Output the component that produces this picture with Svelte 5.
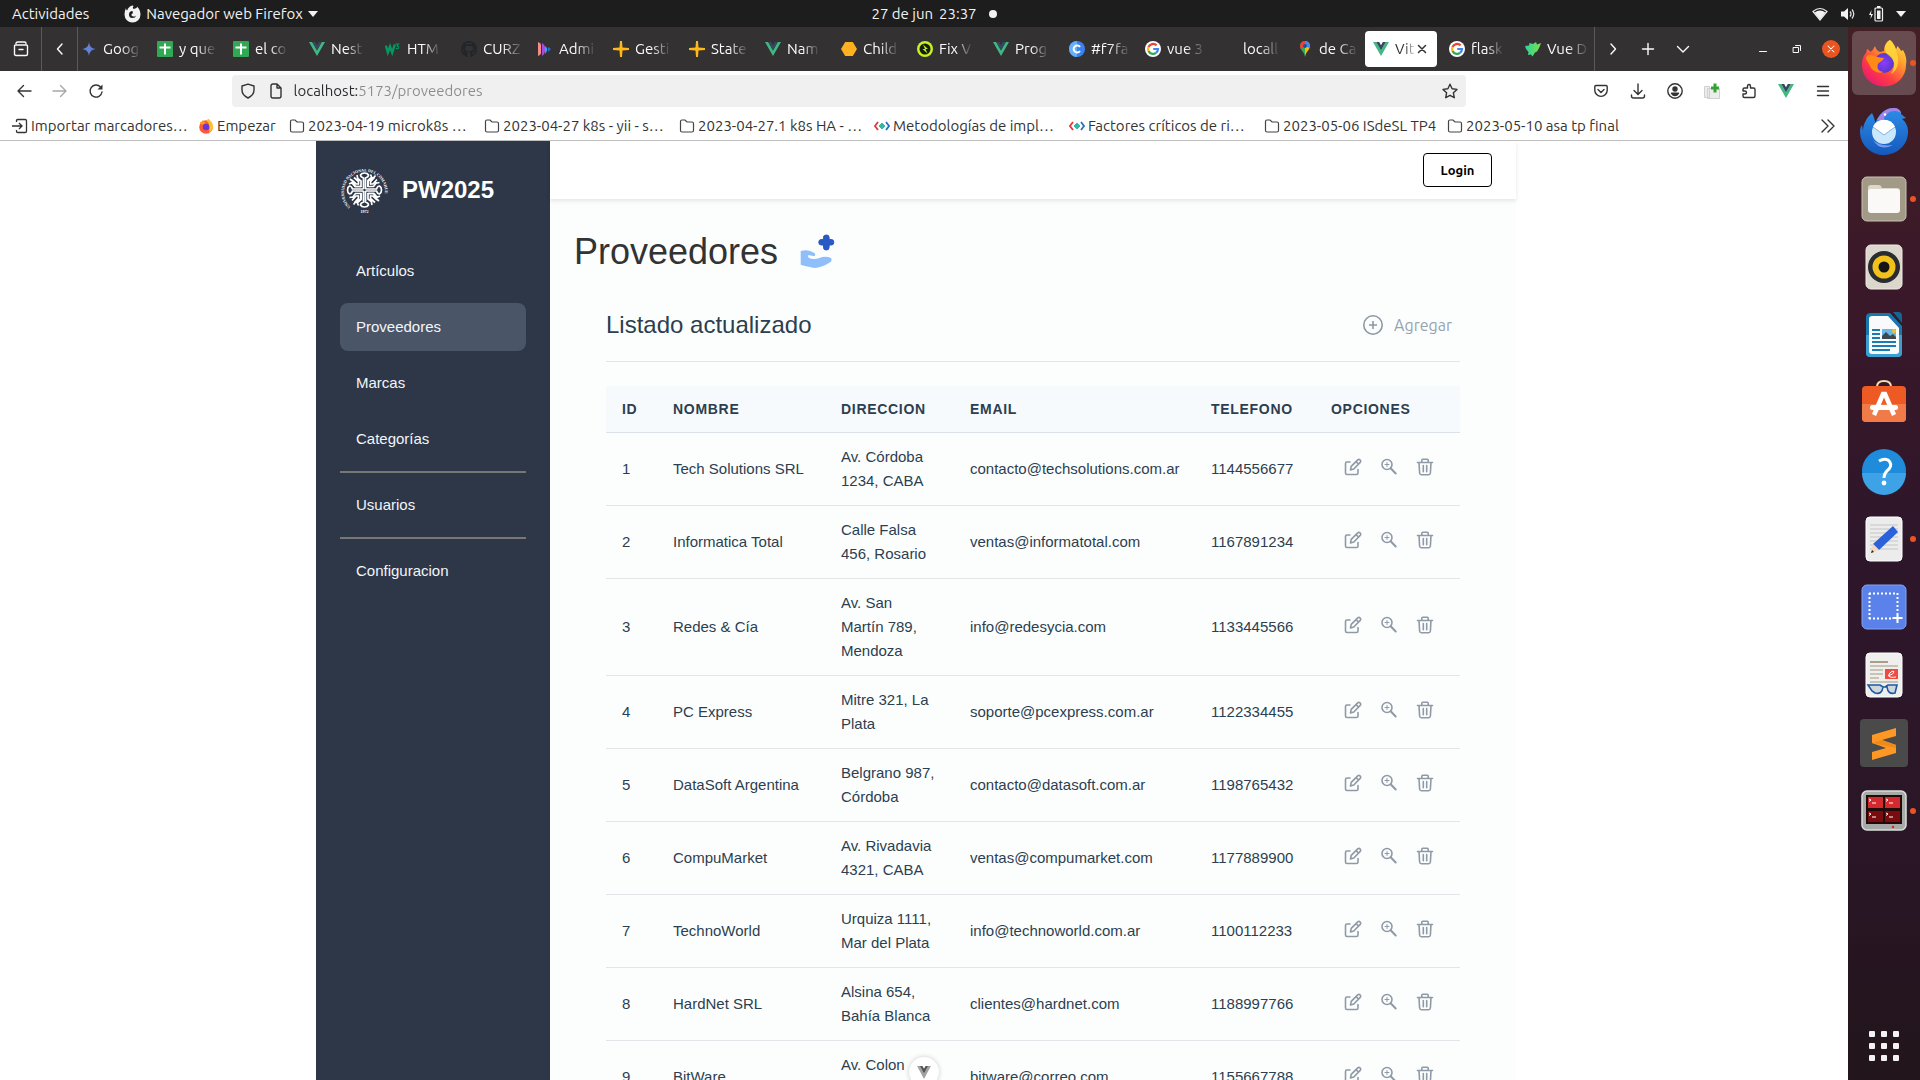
<script lang="ts">
  type Tab = { icon: string; title: string; active?: boolean };

  const tabs: Tab[] = [
    { icon: 'gemini', title: 'Goog' },
    { icon: 'sheet', title: 'y que' },
    { icon: 'sheet', title: 'el co' },
    { icon: 'vue', title: 'Nest' },
    { icon: 'w3', title: 'HTM' },
    { icon: 'github', title: 'CURZ' },
    { icon: 'play', title: 'Admi' },
    { icon: 'star4', title: 'Gesti' },
    { icon: 'star4', title: 'State' },
    { icon: 'vue', title: 'Nam' },
    { icon: 'hex', title: 'Child' },
    { icon: 'bolt', title: 'Fix V' },
    { icon: 'vue', title: 'Prog' },
    { icon: 'color', title: '#f7fa' },
    { icon: 'google', title: 'vue 3' },
    { icon: 'none', title: 'locall' },
    { icon: 'pin', title: 'de Ca' },
    { icon: 'vue', title: 'Vit', active: true },
    { icon: 'google', title: 'flask' },
    { icon: 'bird', title: 'Vue D' }
  ];

  const bookmarks = [
    { icon: 'import', title: 'Importar marcadores…' },
    { icon: 'firefox', title: 'Empezar' },
    { icon: 'folder', title: '2023-04-19 microk8s …' },
    { icon: 'folder', title: '2023-04-27 k8s - yii - s…' },
    { icon: 'folder', title: '2023-04-27.1 k8s HA - …' },
    { icon: 'code', title: 'Metodologías de impl…' },
    { icon: 'code', title: 'Factores críticos de ri…' },
    { icon: 'folder', title: '2023-05-06 ISdeSL TP4' },
    { icon: 'folder', title: '2023-05-10 asa tp final' }
  ];

  const rows = [
    { id: 1, nombre: 'Tech Solutions SRL', direccion: 'Av. Córdoba 1234, CABA', email: 'contacto@techsolutions.com.ar', telefono: '1144556677' },
    { id: 2, nombre: 'Informatica Total', direccion: 'Calle Falsa 456, Rosario', email: 'ventas@informatotal.com', telefono: '1167891234' },
    { id: 3, nombre: 'Redes & Cía', direccion: 'Av. San Martín 789, Mendoza', email: 'info@redesycia.com', telefono: '1133445566' },
    { id: 4, nombre: 'PC Express', direccion: 'Mitre 321, La Plata', email: 'soporte@pcexpress.com.ar', telefono: '1122334455' },
    { id: 5, nombre: 'DataSoft Argentina', direccion: 'Belgrano 987, Córdoba', email: 'contacto@datasoft.com.ar', telefono: '1198765432' },
    { id: 6, nombre: 'CompuMarket', direccion: 'Av. Rivadavia 4321, CABA', email: 'ventas@compumarket.com', telefono: '1177889900' },
    { id: 7, nombre: 'TechnoWorld', direccion: 'Urquiza 1111, Mar del Plata', email: 'info@technoworld.com.ar', telefono: '1100112233' },
    { id: 8, nombre: 'HardNet SRL', direccion: 'Alsina 654, Bahía Blanca', email: 'clientes@hardnet.com', telefono: '1188997766' },
    { id: 9, nombre: 'BitWare', direccion: 'Av. Colon 1555, Salta', email: 'bitware@correo.com', telefono: '1155667788' }
  ];

  const apps = [
    { name: 'firefox', label: 'Firefox', running: true, focused: true },
    { name: 'thunderbird', label: 'Thunderbird' },
    { name: 'files', label: 'Archivos', running: true },
    { name: 'music', label: 'Rhythmbox' },
    { name: 'writer', label: 'Writer' },
    { name: 'software', label: 'Software' },
    { name: 'help', label: 'Ayuda' },
    { name: 'editor', label: 'Editor de texto', running: true },
    { name: 'capture', label: 'Captura' },
    { name: 'reader', label: 'Visor de documentos' },
    { name: 'sublime', label: 'Sublime Text' },
    { name: 'terminator', label: 'Terminator', running: true }
  ];
</script>

{#snippet fav(name: string)}
  <svg class="fav" viewBox="0 0 16 16" aria-hidden="true">
    {#if name === 'gemini'}
      <defs><linearGradient id="gem"><stop offset="0" stop-color="#3f8cf0" /><stop offset=".5" stop-color="#6f7fd0" /><stop offset="1" stop-color="#3f78d8" /></linearGradient></defs>
      <path d="M8 1c.6 4 2 6 6.500 7C10 9 8.600 11 8 15 7.400 11 6 9 1.500 8 6 7 7.400 5 8 1z" fill="url(#gem)" />
    {:else if name === 'sheet'}
      <rect width="16" height="16" rx="1" fill="#31a853" /><path d="M8 2.500v11M2.500 6.500h11" stroke="#fff" stroke-width="2" />
    {:else if name === 'vue'}
      <path d="M0 1h3.200L8 9.500 12.800 1H16L8 15z" fill="#41b883" /><path d="M3.200 1h3L8 4.200 9.800 1h3L8 9.500z" fill="#34495e" />
    {:else if name === 'w3'}
      <path d="M.8 4.500l2 7 2.200-6 2.200 6 2.600-8" fill="none" stroke="#059862" stroke-width="2.400" /><path d="M10.500 3h3l-1.500 2q2 .2 1.500 2-.8 1.300-2.600.3" fill="none" stroke="#059862" stroke-width="1.200" />
    {:else if name === 'github'}
      <path d="M8 .8a7.200 7.200 0 0 0-2.300 14v-2c-2 .4-2.500-.9-2.800-1.500M8 .8a7.200 7.200 0 0 1 2.300 14v-2.300c0-.8-.3-1.300-.6-1.500 2-.2 3.300-1 3.300-3.600 0-.9-.3-1.500-.8-2 .1-.4.300-1.100-.1-2-1 0-1.700.6-2 .8a8 8 0 0 0-4.200 0c-.3-.2-1-.8-2-.8-.4.900-.2 1.600-.1 2-.5.500-.8 1.100-.8 2 0 2.600 1.300 3.400 3.300 3.600" fill="none" stroke="#20262b" stroke-width="1.800" />
    {:else if name === 'play'}
      <path d="M1 1q3 1 3 3v8q0 2-3 3z" fill="#f98a8a" /><path d="M5 2q3 2 3 4v4q0 3-3 5z" fill="#a050e0" /><path d="M8 5l2 2v3l-2 3z" fill="#30a8f0" /><path d="M11 6l3 2-3 3z" fill="#2070d8" />
    {:else if name === 'star4'}
      <path d="M7 0h2l.5 6.500L16 7v2l-6.500.5L9 16H7l-.5-6.500L0 9V7l6.500-.5z" fill="#ffb81c" />
    {:else if name === 'hex'}
      <path d="M4.200 1h7.600L16 8l-4.200 7H4.200L0 8z" fill="#ffb020" />
    {:else if name === 'bolt'}
      <circle cx="8" cy="8" r="8" fill="#c6f221" /><circle cx="8" cy="8" r="5.500" fill="#181c10" /><path d="M6 3.500L11 8H8.500l2 4.500L5.500 8H8z" fill="#c6f221" />
    {:else if name === 'color'}
      <circle cx="8" cy="8" r="8" fill="#3b82f0" /><path d="M0 8a8 8 0 0 1 8-8v16a8 8 0 0 1-8-8z" fill="#62b0ff" /><path d="M11 6a3.500 3.500 0 1 0 0 4" fill="none" stroke="#fff" stroke-width="2" />
    {:else if name === 'google'}
      <circle cx="8" cy="8" r="8" fill="#fff" />
      <g fill="none" stroke-width="2.200"><path d="M11.600 4.400A5 5 0 0 0 3.500 6" stroke="#ea4335" /><path d="M3.500 6a5 5 0 0 0 0 4" stroke="#fbbc05" /><path d="M3.500 10a5 5 0 0 0 7.500 1.900" stroke="#34a853" /><path d="M11 11.900A5 5 0 0 0 13 8H8.200" stroke="#4285f4" /></g>
    {:else if name === 'pin'}
      <path d="M8 0a5 5 0 0 0-5 5c0 4 4 5 5 11z" fill="#34a853" /><path d="M8 0a5 5 0 0 1 5 5c0 4-4 5-5 11z" fill="#fbbc05" /><path d="M8 0a5 5 0 0 1 5 5q0 1-.4 2L8 5z" fill="#4285f4" /><path d="M8 0a5 5 0 0 0-5 5q0 2 1 3l4-3z" fill="#ea4335" /><circle cx="8" cy="5" r="1.900" fill="#1d4fa0" />
    {:else if name === 'bird'}
      <defs><linearGradient id="brd"><stop offset="0" stop-color="#2fd0a0" /><stop offset="1" stop-color="#7be04a" /></linearGradient></defs>
      <path d="M0 5l4-.5L4.500 2 8 3l3-2 1 2.500L16 2l-1.500 4-1 2-1.500 2.500-2 1-2.500 4-1.500-2-3 .5.500-3L1 8z" fill="url(#brd)" />
    {:else if name === 'firefox'}
      <circle cx="8" cy="9" r="6.800" fill="#ff5a36" /><path d="M8 2.500q4-3 3-1 4 3 4 7a7 7 0 0 1-4 6q2-9-3-12z" fill="#ffc22e" /><path d="M2 4q2 0 3-2 0 2 3 3l-4 2z" fill="#ff9a1f" /><circle cx="8" cy="9" r="3.200" fill="#6a35d8" />
    {:else if name === 'folder'}
      <path d="M1.500 3.500q0-1.500 1.500-1.500h3l2 2h5q1.500 0 1.500 1.500v7q0 1.500-1.500 1.500H3q-1.500 0-1.500-1.500z" fill="none" stroke="#444" stroke-width="1.200" />
    {:else if name === 'import'}
      <path d="M4.500 4V2.800q0-1.300 1.300-1.300h7.400q1.300 0 1.300 1.300v10.400q0 1.300-1.300 1.300H5.800q-1.300 0-1.300-1.300V12M0 8h10M7 5l3 3-3 3" fill="none" stroke="#333" stroke-width="1.300" />
    {:else if name === 'code'}
      <path d="M4 4L1 8l3 4" fill="none" stroke="#e23b3b" stroke-width="1.800" /><path d="M12 4l3 4-3 4" fill="none" stroke="#2c6fc0" stroke-width="1.800" /><path d="M8 5l3 3-3 3-3-3z" fill="#35b8a5" stroke="#35b8a5" stroke-linejoin="round" />
    {/if}
  </svg>
{/snippet}

{#snippet line(name: string)}
  <svg class="line" viewBox="0 0 16 16" aria-hidden="true">
    {#if name === 'archive'}
      <path d="M3 2.500q0-1.500 1.500-1.500h7q1.500 0 1.500 1.500M1.500 5q0-1 1-1h11q1 0 1 1v8q0 1.500-1.500 1.500H3q-1.500 0-1.500-1.500zM6 8.500h4" />
    {:else if name === 'left'}<path d="M10 3L5.500 8l4.500 5" />
    {:else if name === 'right'}<path d="M6 3l4.500 5L6 13" />
    {:else if name === 'down'}<path d="M2.500 5.500L8 11l5.500-5.500" />
    {:else if name === 'plus'}<path d="M8 2.500v11M2.500 8h11" />
    {:else if name === 'close'}<path d="M4 4l8 8M12 4l-8 8" />
    {:else if name === 'min'}<path d="M4.500 10.500h7" stroke-width="1" />
    {:else if name === 'restore'}<path d="M4.500 6.500h5v5h-5zM6.500 4.500h5v5" stroke-width="1" />
    {:else if name === 'back'}<path d="M15 8H2M7.500 2.500L2 8l5.500 5.500" />
    {:else if name === 'forward'}<path d="M1 8h13M8.500 2.500L14 8l-5.500 5.500" />
    {:else if name === 'reload'}<path d="M14 9A6 6 0 1 1 12.500 4" /><path d="M14.500 1.500v5H9.500z" fill="currentColor" stroke="none" />
    {:else if name === 'shield'}<path d="M8 1.200L14 3v4q0 5-6 8-6-3-6-8V3z" />
    {:else if name === 'page'}<path d="M3 3q0-2 2-2h4l4 4v8q0 2-2 2H5q-2 0-2-2zM9 1v4h4" />
    {:else if name === 'star'}<path d="M8 1.200l2.100 4.500 4.900.7-3.600 3.400.9 4.900L8 12.300l-4.300 2.400.9-4.900L1 6.400l4.900-.7z" />
    {:else if name === 'pocket'}<path d="M3 2.500h10q1.200 0 1.200 1.200v3.500a6.200 6.200 0 0 1-12.400 0V3.700q0-1.200 1.200-1.200zM5 6.500l3 3 3-3" />
    {:else if name === 'download'}<path d="M8 1v10M4 7.500L8 11.500l4-4M1.500 12v1q0 2 2 2h9q2 0 2-2v-1" />
    {:else if name === 'account'}<circle cx="8" cy="8" r="7.200" /><circle cx="8" cy="6" r="2" fill="currentColor" /><path d="M4.500 10.300h7Q10 12.500 8 12.500T4.500 10.300z" fill="currentColor" />
    {:else if name === 'puzzle'}<path d="M3.500 5h3V3.200q0-1.700 1.500-1.700t1.500 1.700V5h3q1.500 0 1.500 1.500v6.500q0 1.500-1.500 1.500H3.500q-1.500 0-1.500-1.500V11h1.800q1.700 0 1.700-1.500T3.800 8H2V6.500Q2 5 3.500 5z" />
    {:else if name === 'menu'}<path d="M2.500 3.500h11M2.500 8h11M2.500 12.500h11" />
    {:else if name === 'more'}<path d="M2 2l6 6-6 6M8 2l6 6-6 6" />
    {/if}
  </svg>
{/snippet}

{#snippet app(name: string)}
  <svg class="app" viewBox="0 0 48 48" aria-hidden="true">
    {#if name === 'firefox'}
      <defs>
        <linearGradient id="ffa" x1="1" y1="0" x2=".2" y2="1"><stop offset="0" stop-color="#fff044" /><stop offset=".35" stop-color="#ffa02c" /><stop offset=".7" stop-color="#ff3b44" /><stop offset="1" stop-color="#e81577" /></linearGradient>
        <radialGradient id="ffb"><stop offset="0" stop-color="#8a3dff" /><stop offset="1" stop-color="#5a38c8" /></radialGradient>
      </defs>
      <path d="M30 1c3 2 5 6 6 9 1-1 1-2 1-3 2 1 3 3 4 5l2-1c3 5 4 10 3 15a22 21 0 0 1-44 1c0-6 1-10 4-13l1-4c2 1 3 2 3 3 2-1 3-2 5-6 1 3 2 5 5 6l4-1c0-5 2-9 6-11z" fill="url(#ffa)" />
      <circle cx="24" cy="24" r="10" fill="url(#ffb)" />
      <path d="M6 20c0-3 2-5 5-4 4 0 6 3 13 3-1 3-5 4-6 6-2 5 2 8 6 8-6 2-12-1-14-6z" fill="#ff8a16" />
      <path d="M30 1c3 3 6 8 7 14 3 8 0 17-6 20 6-9 3-15-4-20-4-5-2-11 3-14z" fill="#ffdc3c" opacity=".8" />
    {:else if name === 'thunderbird'}
      <defs><linearGradient id="tb" x1="0" y1="0" x2="0" y2="1"><stop offset="0" stop-color="#2e8de8" /><stop offset="1" stop-color="#1459bc" /></linearGradient></defs>
      <path d="M12 6c2 4 3 7 3 10 4-8 9-15 18-15 6 0 9 4 8 6l5 4-4 1c4 3 6 8 6 12a24 23 0 0 1-48 2c0-3 0-6 2-8l1 6c0-7 4-14 9-18z" fill="url(#tb)" />
      <path d="M17 13C21 5 27 1 34 1c4 0 6 2 7 5-7-4-15-2-18 8z" fill="#a483e8" />
      <circle cx="25" cy="7.500" r="1.300" fill="#fff" />
      <circle cx="24" cy="25" r="12" fill="#c9e8fc" /><path d="M13 20l11 8 11-8a12 12 0 0 0-22 0z" fill="#fff" />
      <path d="M13 20l11 8 11-8" fill="none" stroke="#7fb5e6" />
      <path d="M13 33q7 7 20 5-13 7-20-5z" fill="#7c9af0" />
    {:else if name === 'files'}
      <rect x="2" y="2" width="44" height="44" rx="5" fill="#a29a86" stroke="#c8c2b4" /><path d="M8 13q0-3 3-3h8q2 0 3 3h15q3 0 3 3v6H8z" fill="#dcd8cc" /><rect x="8" y="14" width="32" height="24" rx="3" fill="#faf9f8" />
    {:else if name === 'music'}
      <rect x="6" y="2" width="36" height="44" rx="5" fill="#dcd7cc" stroke="#efebe4" /><circle cx="24" cy="24" r="16" fill="#2b2c30" /><circle cx="24" cy="24" r="11.500" fill="#f2c21c" /><circle cx="24" cy="24" r="5.500" fill="#151515" />
    {:else if name === 'writer'}
      <path d="M11 2h19l12 13v27q0 4-4 4H10q-4 0-4-4V6q0-4 5-4z" fill="#1778ac" /><path d="M6 24h36v18q0 4-4 4H10q-4 0-4-4z" fill="#3b9fd0" /><path d="M33 1h5q4 0 4 4v7z" fill="#126794" />
      <path d="M12 5h16l11 12v23q0 3-3 3H12q-3 0-3-3V8q0-3 3-3z" fill="#f8fafb" />
      <path d="M12 19h8M12 23h8M12 27h8M12 31h24M12 35h24M12 39h18" stroke="#1a7cb0" stroke-width="2" /><rect x="22" y="18" width="14" height="10" fill="#6ab8e8" /><path d="M22 28v-3l4-4 4 4 3-2 3 3v2z" fill="#3c4a50" /><circle cx="34" cy="20" r="2" fill="#f6c322" />
    {:else if name === 'software'}
      <path d="M17 8q0-6 7-6t7 6" fill="none" stroke="#f5dca8" stroke-width="2" /><rect x="2" y="7" width="44" height="36" rx="4" fill="#ee5a24" /><path d="M2 25h44v14q0 4-4 4H6q-4 0-4-4z" fill="#f17b48" /><path d="M14 36l9-21h2l9 21" fill="none" stroke="#fff" stroke-width="4.500" /><rect x="10" y="26" width="28" height="5" rx="2.500" fill="#fff" />
    {:else if name === 'help'}
      <circle cx="24" cy="24" r="22" fill="#1f8bdb" /><path d="M2 26a22 22 0 0 0 44 0z" fill="#3ea3e6" /><path d="M19 14q5-3 9-1 5 4 1 9-5 4-5 9" fill="none" stroke="#fff" stroke-width="3" /><circle cx="24" cy="36" r="2.400" fill="#fff" />
    {:else if name === 'editor'}
      <rect x="6" y="2" width="36" height="44" rx="4" fill="#ececec" stroke="#fff" /><path d="M10 10h28M10 14h28M10 18h28M10 22h28M10 26h28M10 30h28M10 34h28" stroke="#c4c4c4" /><path d="M33 11l5 6-19 18-6-6z" fill="#2b62d9" /><path d="M13 29l6 6-8 3z" fill="#f6d8b8" /><path d="M12 35l2 2-3 1z" fill="#222" />
    {:else if name === 'capture'}
      <rect x="2" y="2" width="44" height="44" rx="5" fill="#5b82ea" stroke="#82a2f6" /><path d="M9 10.500h28M9 35.500h22M9.500 10v26M37.500 10v20" stroke="#fff" stroke-width="2" stroke-dasharray="2 2" fill="none" /><path d="M37.500 30v10M32.500 35h10" stroke="#fff" stroke-width="2" />
    {:else if name === 'reader'}
      <rect x="6" y="2" width="36" height="44" rx="4" fill="#efefee" stroke="#fff" /><path d="M10 11h18" stroke="#a89e8c" stroke-width="2" /><path d="M10 15h28M10 19h13M10 23h13M10 27h9M10 31h28" stroke="#c9c3b6" stroke-width="2" /><rect x="25" y="18" width="13" height="10" fill="#f04a43" /><path d="M28 25q6-2 6-4t-3 0-2 4 7 1" fill="none" stroke="#fff" /><path d="M8 34h12l3 2h2l3-2h9l-2 8q-7 2-8-6h-4q-1 8-8 6l-3-2z" fill="#cfd6dc" stroke="#1b5aa5" stroke-width="1.600" />
    {:else if name === 'sublime'}
      <rect width="48" height="48" rx="4" fill="#4a4a4a" /><path d="M12 16l24-7v8l-14 4 14 5v8l-24 7v-8l14-4-14-5z" fill="#ff9724" /><path d="M12 24l24 5v-3l-14-5z" fill="#ee8a18" />
    {:else if name === 'terminator'}
      <rect x="2" y="4" width="44" height="39" rx="5" fill="#a7aaa6" stroke="#dcdedb" stroke-width="1.500" /><rect x="6" y="8" width="36" height="29" fill="#200a0a" /><path d="M8 10h15v11H8zM25 10h15v11H25z" fill="#d42a2e" /><path d="M8 24h15v11H8zM25 24h15v11H25z" fill="#7a0c0f" /><path d="M9 12l2 1-2 1.500M12 16h4M26 12l2 1-2 1.500M29 16h4M9 26l2 1-2 1.500M12 30h4M26 26l2 1-2 1.500M29 30h4" stroke="#fff" fill="none" /><circle cx="33" cy="40" r="1.200" fill="#d22" />
    {/if}
  </svg>
{/snippet}

<div class="desktop">
  <div class="topbar">
    <div class="topleft">
      <button>Actividades</button>
      <button class="appmenu">
        <svg width="17" height="18" viewBox="0 0 17 18" aria-hidden="true"><path fill-rule="evenodd" d="M6 1.500Q9 0 9.500 1 8 3 9.500 4q4-1 3.500-2.500Q16.500 5 16.500 9.500a8 8 0 0 1-16 0Q.5 6 2 3q0 2 1 2.500Q4 3 6 1.500zM8.500 6Q5 6 5 9.500t3.500 3.500 3.500-3q0 2-2.500 1.500T7.500 9q2 0 1-3z" fill="#f2f2f2" /></svg>
        Navegador web Firefox
        <svg width="10" height="6" viewBox="0 0 10 6" aria-hidden="true"><path d="M0 0h10L5 6z" fill="#f2f2f2" /></svg>
      </button>
    </div>
    <button class="clock"><span>27 de jun</span><span>23:37</span><i></i></button>
    <button class="status" aria-label="Sistema">
      <svg width="16" height="14" viewBox="0 0 16 14" aria-hidden="true"><path d="M1 4.500q7-6 14 0L8 13z" fill="none" stroke="#eee" stroke-width="1.200" /><path d="M2.500 5.500q5.500-4 11 0L8 12.500z" fill="#f2f2f2" /></svg>
      <svg width="16" height="14" viewBox="0 0 16 14" aria-hidden="true"><path d="M1 4.500h3L8 1v12L4 9.500H1z" fill="#f2f2f2" /><path d="M10 4.500q2 2.500 0 5M12 2.500q3.500 4.500 0 9" stroke="#ddd" stroke-width="1.300" fill="none" /></svg>
      <svg width="16" height="16" viewBox="0 0 16 16" aria-hidden="true"><path d="M3.500 4L1 9h2l-.5 4L5 8H3z" fill="#f2f2f2" /><rect x="7" y="2" width="7.500" height="13" rx="1" fill="none" stroke="#f2f2f2" stroke-width="1.200" /><path d="M9 0h3.500v2H9zM9 4.500h3.500V13H9z" fill="#f2f2f2" /></svg>
      <svg width="10" height="6" viewBox="0 0 10 6" aria-hidden="true"><path d="M0 0h10L5 6z" fill="#f2f2f2" /></svg>
    </button>
  </div>

  <div class="workspace">
    <div class="browser">
      <div class="tabstrip">
        <button class="archive" aria-label="Ver pestañas">{@render line('archive')}</button>
        <button class="scroll" aria-label="Anterior">{@render line('left')}</button>
        <div class="tabs">
          {#each tabs as tab, i (i)}
            <button class="tab" class:active={tab.active}>
              {@render fav(tab.icon)}
              <span class="tabtitle">{tab.title}</span>
              {#if tab.active}<span class="tabclose">{@render line('close')}</span>{/if}
            </button>
          {/each}
        </div>
        <div class="tabtools">
          <button aria-label="Siguiente">{@render line('right')}</button>
          <button aria-label="Nueva pestaña">{@render line('plus')}</button>
          <button aria-label="Listar pestañas">{@render line('down')}</button>
        </div>
        <div class="wincontrols">
          <button aria-label="Minimizar">{@render line('min')}</button>
          <button aria-label="Restaurar">{@render line('restore')}</button>
          <button class="quit" aria-label="Cerrar">{@render line('close')}</button>
        </div>
      </div>

      <div class="navbar">
        <div class="navbuttons">
          <button aria-label="Atrás">{@render line('back')}</button>
          <button class="disabled" aria-label="Adelante">{@render line('forward')}</button>
          <button aria-label="Recargar">{@render line('reload')}</button>
        </div>
        <div class="urlbar">
          {@render line('shield')}
          {@render line('page')}
          <input type="text" aria-label="Dirección" value="localhost:5173/proveedores" />
          <button aria-label="Agregar a marcadores">{@render line('star')}</button>
        </div>
        <div class="navtools">
          <button aria-label="Pocket">{@render line('pocket')}</button>
          <button aria-label="Descargas">{@render line('download')}</button>
          <button aria-label="Cuenta">{@render line('account')}</button>
          <button aria-label="Notas"><svg width="16" height="16" viewBox="0 0 16 16" aria-hidden="true"><path d="M.5 3.500h5v11h-5zM3.500 5.500h12v10h-12z" fill="#ececec" stroke="#d0d0d0" /><path d="M9.500.5h3v3H15v3h-2.500v3h-3v-3H7v-3h2.500z" fill="#35a333" /></svg></button>
          <button aria-label="Extensiones">{@render line('puzzle')}</button>
          <button aria-label="Vue devtools">{@render fav('vue')}</button>
          <button aria-label="Menú">{@render line('menu')}</button>
        </div>
      </div>

      <div class="bookmarks">
        <div class="marks">
          {#each bookmarks as mark (mark.title)}
            <button class="mark">{@render fav(mark.icon)}<span>{mark.title}</span></button>
          {/each}
        </div>
        <button class="moremarks" aria-label="Más marcadores">{@render line('more')}</button>
      </div>

      <div class="viewport">
        <div class="site">
          <aside class="sidebar">
            <div class="brand">
              <svg class="seal" viewBox="0 0 49 48" aria-hidden="true">
                <defs><path id="ring" d="M10.500 41A20.500 20.500 0 1 1 38.500 41" /></defs>
                <text class="ringtext"><textPath href="#ring">UNIVERSIDAD NACIONAL DEL COMAHUE</textPath></text>
                <text class="year" x="24.500" y="47" text-anchor="middle">1972</text>
                <g fill="none" stroke="#fff" stroke-width="1.700">
                  {#each [0, 90, 180, 270] as turn}
                    <g transform="rotate({turn} 24.5 24)">
                      <path d="M23.500 23V12q-3-1-3-3 1-2 4-2 3 0 4 2 0 2-3 3v11" />
                      <path d="M21 21v-6l-4-3M18.500 18.500v-3L14 11.500M21 20.500h-6l-3-3.500M16 18l-6-5M18 14l-1-5M13.500 16L9 18" />
                      <path d="M28 21v-6l4-3M30.500 18.500v-3l4-4" />
                    </g>
                  {/each}
                </g>
              </svg>
              <strong>PW2025</strong>
            </div>
            <nav>
              <a href="#articulos">Artículos</a>
              <a href="#proveedores" class="current">Proveedores</a>
              <a href="#marcas">Marcas</a>
              <a href="#categorias">Categorías</a>
              <hr />
              <a href="#usuarios">Usuarios</a>
              <hr />
              <a href="#configuracion">Configuracion</a>
            </nav>
          </aside>

          <div class="main">
            <header><button class="login">Login</button></header>
            <section>
              <div class="title">
                <h1>Proveedores</h1>
                <svg width="36" height="36" viewBox="0 0 36 36" aria-hidden="true">
                  <path d="M.7 17Q6 15.500 10 17l4 1.800q1.800 1 1 2.600-.4 1-2 .7L8.500 21q-.8 1.400 0 2.600Q10 25.200 14 25q4 0 8-2l4-.3q4 0 5.300 1.600.8 2.500-1 4-9.300 5.700-15.700 5.700-5-.6-13.900-3.200z" fill="#8fbffa" />
                  <path d="M23.500 3.200q0-2.200 2.800-2.200t2.800 2.200v2.300h2.300q2.400 0 2.400 2.800t-2.400 2.700h-2.300v2.400q0 2.600-2.800 2.600t-2.800-2.600V11h-2.300q-2.400 0-2.400-2.700t2.400-2.800h2.300z" fill="#2859c5" stroke="#2859c5" />
                </svg>
              </div>

              <div class="card">
                <div class="toolbar">
                  <h2>Listado actualizado</h2>
                  <button class="add">
                    <svg width="20" height="20" viewBox="0 0 20 20" aria-hidden="true"><circle cx="10" cy="10" r="9.200" /><path d="M10 6v8M6 10h8" /></svg>
                    Agregar
                  </button>
                </div>
                <table>
                  <colgroup><col class="cid" /><col class="cname" /><col class="caddr" /><col class="cmail" /><col class="cphone" /><col class="copts" /></colgroup>
                  <thead>
                    <tr><th>ID</th><th>NOMBRE</th><th>DIRECCION</th><th>EMAIL</th><th>TELEFONO</th><th>OPCIONES</th></tr>
                  </thead>
                  <tbody>
                    {#each rows as row (row.id)}
                      <tr>
                        <td>{row.id}</td>
                        <td>{row.nombre}</td>
                        <td>{row.direccion}</td>
                        <td>{row.email}</td>
                        <td>{row.telefono}</td>
                        <td>
                          <div class="options">
                            <button aria-label="Editar"><svg viewBox="0 0 18 18" aria-hidden="true"><path d="M6 4H3Q1.500 4 1.500 5.500V15q0 1.500 1.500 1.500h9.500q1.500 0 1.500-1.500v-3.500" /><path d="M6.500 12l.7-3.600 6.500-6.500q1.300-1 2.500.1 1 1.300 0 2.400L9.800 11zM12 3.700L14.500 6" /></svg></button>
                            <button aria-label="Ver"><svg viewBox="0 0 18 18" aria-hidden="true"><circle cx="7" cy="6.500" r="5" /><path d="M10.700 10.200l5 5.300" stroke-width="2" /><path d="M7 4.500v4M5 6.500h4" stroke-width="1" /></svg></button>
                            <button aria-label="Eliminar"><svg viewBox="0 0 18 18" aria-hidden="true"><path d="M1.500 4.500h15M5.800 4.200V2.300q0-1 1-1h4.400q1 0 1 1v1.900M3 4.500l.6 10.500q.2 1.700 1.700 1.700h7.400q1.500 0 1.700-1.700L15 4.500M7.300 7.500v6.200M10.700 7.500v6.200" /></svg></button>
                          </div>
                        </td>
                      </tr>
                    {/each}
                  </tbody>
                </table>
              </div>
            </section>
          </div>
        </div>
        <button class="devtools" aria-label="Vue DevTools"><svg width="14" height="13" viewBox="0 0 16 15" aria-hidden="true"><path d="M0 0h3.200L8 9l4.800-9H16L8 15z" fill="#a2a2a2" /><path d="M3.200 0h3L8 3.200 9.800 0h3L8 9z" fill="#555" /></svg></button>
      </div>
    </div>

    <div class="dock">
      {#each apps as item (item.name)}
        <button class="tile" class:focused={item.focused} class:running={item.running} aria-label={item.label}>{@render app(item.name)}</button>
      {/each}
      <button class="tile grid" aria-label="Mostrar aplicaciones">
        <svg class="app" viewBox="0 0 48 48" aria-hidden="true">
          {#each [9, 21, 33] as x}{#each [9, 21, 33] as y}<rect {x} {y} width="6" height="6" rx="1" fill="#f3f1f2" />{/each}{/each}
        </svg>
      </button>
    </div>
  </div>
</div>

<style>
  :global(body) { margin: 0; background: #fff; }
  .desktop { height: 100vh; display: flex; flex-direction: column; overflow: hidden; font: 15px/20px Ubuntu, 'Noto Sans', sans-serif; color: #333; }
  button { font: inherit; color: inherit; background: none; border: 0; padding: 0; margin: 0; display: flex; align-items: center; justify-content: center; white-space: nowrap; }
  svg { display: block; flex: none; }
  .fav { width: 16px; height: 16px; }
  .line { width: 16px; height: 16px; fill: none; stroke: currentColor; stroke-width: 1.4; stroke-linejoin: round; stroke-linecap: round; }

  .topbar { height: 27px; flex: none; display: grid; grid-template-columns: 1fr auto 1fr; align-items: center; background: #1d1d1d; color: #f2f2f2; padding: 0 14px 0 12px; }
  .topleft { display: flex; gap: 35px; }
  .appmenu { gap: 5px; }
  .clock { gap: 6px; padding-right: 50px; }
  .clock i { width: 8px; height: 8px; border-radius: 50%; background: #f2f2f2; margin-left: 6px; }
  .status { justify-self: end; gap: 12px; }

  .workspace { flex: 1; min-height: 0; display: flex; }
  .browser { flex: 1; min-width: 0; display: flex; flex-direction: column; background: #fff; }

  .tabstrip { height: 44px; flex: none; display: flex; background: #333132; color: #fbfbfe; }
  .archive { width: 42px; border-right: 1px solid #5b595a; }
  .scroll { width: 36px; border-right: 1px solid #5b595a; }
  .tabs { flex: 1; min-width: 0; display: flex; gap: 4px; align-items: center; overflow: hidden; border-right: 1px solid #5b595a; justify-content: flex-end; }
  .tab { width: 72px; height: 36px; flex: none; box-sizing: border-box; border-radius: 4px; padding: 0 8px; gap: 6px; justify-content: flex-start; }
  .tab:last-child { margin-right: 5px; }
  .tabtitle { flex: none; text-align: left; mask-image: linear-gradient(to right, #000 50%, rgba(0, 0, 0, 0.1)); }
  .tab.active { background: #fff; color: #333; gap: 6px; padding-right: 0; }
  .tabclose { margin-left: -6px; }
  .tabclose .line { width: 14px; height: 14px; stroke-width: 1.7; }
  .tabtools { display: flex; flex: none; padding-right: 54px; }
  .tabtools button { width: 35px; }
  .wincontrols { display: flex; flex: none; align-items: center; gap: 16px; padding-right: 8px; }
  .wincontrols button { width: 18px; height: 18px; }
  .wincontrols .quit { background: #e95420; border-radius: 50%; }
  .quit .line { width: 12px; height: 12px; }

  .navbar { flex: none; height: 40px; display: flex; align-items: center; justify-content: space-between; padding: 0 7px 0 16px; }
  .navbuttons { display: flex; gap: 20px; width: 215px; }
  .disabled { color: #a8a8a8; }
  .urlbar { flex: 0 1 1234px; height: 32px; box-sizing: border-box; display: flex; align-items: center; gap: 12px; background: #f0f0f0; border-radius: 4px; padding: 0 8px; }
  .urlbar input { flex: 1; min-width: 0; height: 20px; border: 0; outline: 0; padding: 0; margin-left: -2px; font: inherit; color: transparent; background: linear-gradient(to right, #2a2a2e 64px, #8c8c8c 64px); background-clip: text; -webkit-background-clip: text; }
  .navtools { display: flex; margin-left: 116px; }
  .navtools button { width: 37px; height: 32px; }

  .bookmarks { flex: none; height: 29px; display: flex; justify-content: space-between; border-bottom: 1px solid #bfbfbf; padding: 0 12px; }
  .marks { display: grid; grid-template-columns: 186px 91px repeat(5, 195px) 183px auto; }
  .mark { gap: 3px; justify-content: flex-start; }
  .moremarks { width: 16px; }

  .viewport { flex: 1; min-height: 0; position: relative; overflow: hidden; padding-right: 16px; }
  .site { max-width: 1200px; margin: 0 auto; display: flex; min-height: 100%; font-family: 'Liberation Sans', Arial, sans-serif; background: #fcfefe; }
  .sidebar { width: 234px; flex: none; box-sizing: border-box; padding: 24px; background: #2d3748; color: #f3f5f8; }
  .brand { display: flex; align-items: center; gap: 13px; height: 50px; margin-bottom: 32px; }
  .brand strong { font-size: 24px; line-height: 32px; color: #fff; }
  .seal { width: 49px; height: 48px; }
  .ringtext, .year { font: bold 4px 'Liberation Serif', serif; fill: #fff; }
  nav { display: flex; flex-direction: column; gap: 8px; }
  nav a { height: 48px; line-height: 48px; padding: 0 16px; border-radius: 8px; font-size: 15px; color: inherit; text-decoration: none; }
  nav .current { background: #4a5568; }
  nav hr { width: 100%; height: 2px; border: 0; margin: 0; background: #787775; }

  .main { flex: 1; min-width: 0; }
  header { height: 58px; box-sizing: border-box; display: flex; align-items: center; justify-content: flex-end; padding: 0 24px; background: #fff; box-shadow: 0 2px 4px rgba(0, 0, 0, 0.1); }
  .login { width: 69px; height: 34px; border: 1px solid #000; border-radius: 4px; background: #fff; color: #000; font: bold 13px/20px Ubuntu, 'Noto Sans', sans-serif; }
  section { padding: 24px; }
  .title { display: flex; align-items: center; gap: 22px; }
  h1 { margin: 0; font-size: 36px; line-height: 58px; font-weight: 400; color: #333; }
  .card { padding: 8px 32px; }
  .toolbar { display: flex; justify-content: space-between; align-items: center; padding: 20px 8px 20px 0; border-bottom: 1px solid #e2e6e8; margin-bottom: 24px; }
  h2 { margin: 0; font-size: 24px; line-height: 32px; font-weight: 400; color: #2c3e50; }
  .add { gap: 11px; font: 16px/24px Ubuntu, 'Noto Sans', sans-serif; color: #98a2ae; }
  .add svg { fill: none; stroke: #8c98a4; stroke-width: 1.6; }

  table { width: 100%; table-layout: fixed; border-collapse: separate; border-spacing: 0; color: #2c3e50; }
  .cid { width: 51px; }
  .cname { width: 168px; }
  .caddr { width: 129px; }
  .cmail { width: 241px; }
  .cphone { width: 120px; }
  .copts { width: 145px; }
  th { padding: 12px 16px; font-size: 14px; line-height: 22px; letter-spacing: 0.05em; text-align: left; background: #f7fafd; border-bottom: 1px solid #dde2e6; }
  td { padding: 12px 16px; font-size: 15px; line-height: 24px; border-bottom: 1px solid #e2e6e8; vertical-align: middle; }
  .options { display: flex; justify-content: center; padding: 0 0 4px 2px; }
  .options button { width: 36px; height: 28px; flex: none; }
  .options svg { width: 18px; height: 18px; fill: none; stroke: #8f9aa6; stroke-width: 1.6; stroke-linejoin: round; stroke-linecap: round; }

  .devtools { position: absolute; left: 50%; bottom: -7px; width: 30px; height: 30px; margin-left: -15px; border-radius: 50%; background: #fff; box-shadow: 0 0 5px rgba(0, 0, 0, 0.2); }

  .dock { width: 72px; flex: none; box-sizing: border-box; display: flex; flex-direction: column; align-items: center; gap: 4px; padding: 4px 0 2px; background: linear-gradient(#432024, #3a1829 25%, #2e162a 50%, #2b1628 75%, #22151b); }
  .tile { position: relative; width: 64px; height: 64px; flex: none; border-radius: 6px; }
  .tile.focused { background: rgba(255, 255, 255, 0.2); }
  .tile.running::after { content: ''; position: absolute; right: 0; top: 29px; width: 6px; height: 6px; border-radius: 50%; background: #e95420; }
  .tile.grid { margin-top: auto; }
  .app { width: 48px; height: 48px; }
</style>
